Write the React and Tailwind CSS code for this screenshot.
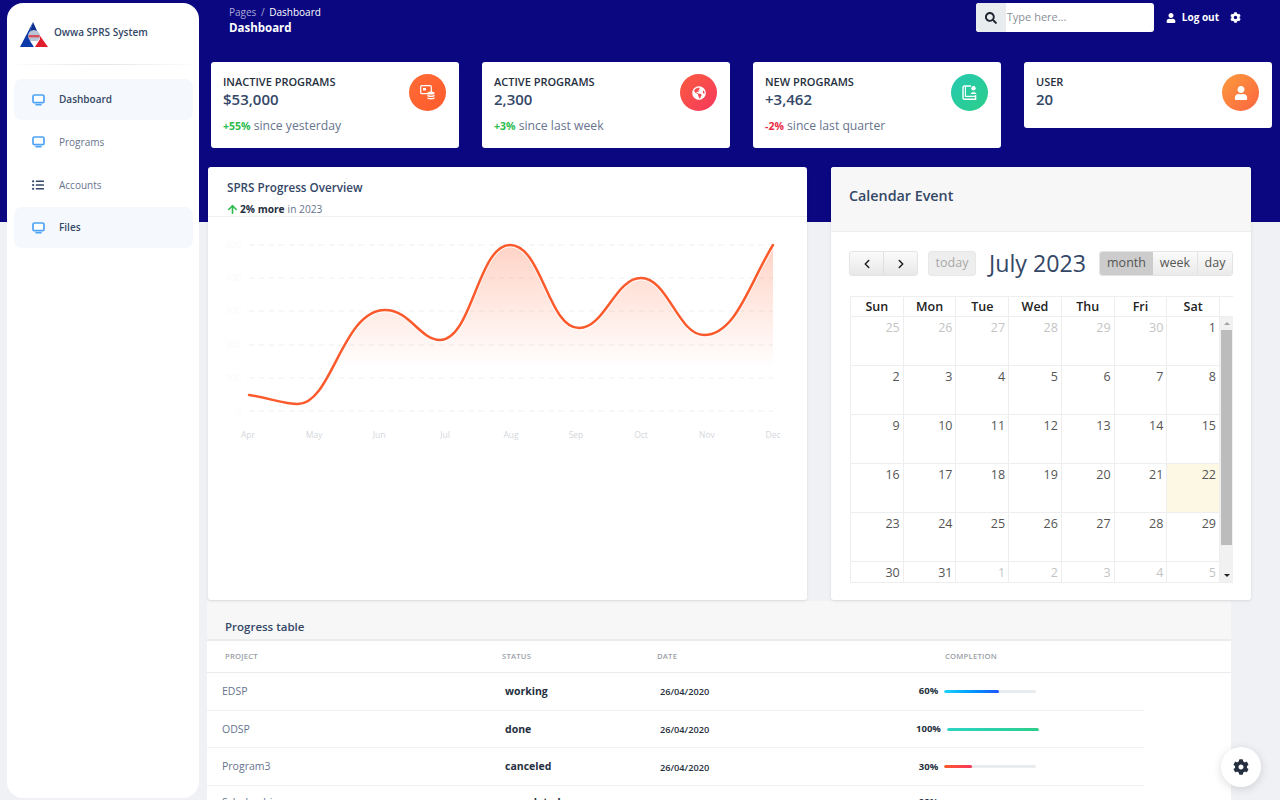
import React from "react";
import { FaSearch, FaUser, FaCog, FaListUl, FaGlobeAmericas } from "react-icons/fa";
import { ArrowUp, ChevronLeft, ChevronRight } from "lucide-react";

function Logo() {
  return (
    <svg width="30" height="27" viewBox="0 0 30 27" className="mt-[4px] shrink-0">
      <path d="M14 1 L1 26 L15 26 L10 14 Z" fill="#0c3aa8" />
      <path d="M14 1 L19 12 L10 14 Z" fill="#0c2f8f" />
      <path d="M19 12 L29 26 L16 26 L21 18 Z" fill="#e0202e" />
      <circle cx="15" cy="15" r="6" fill="#b9c4d6" />
      <rect x="9.5" y="14" width="11" height="2.4" fill="#d8505a" />
      <path d="M11 20 L19 20 L15 26 Z" fill="#ffffff" />
    </svg>
  );
}

function MonitorIcon() {
  return (
    <svg width="13" height="12" viewBox="0 0 13 12" className="shrink-0">
      <rect x="1" y="1" width="11" height="7.6" rx="1.4" fill="#ffffff" stroke="#4da3f5" strokeWidth="1.7" />
      <path d="M4 10.8 H9" stroke="#4da3f5" strokeWidth="1.6" strokeLinecap="round" />
    </svg>
  );
}

function NavItem({ label, active, strong, icon }) {
  return (
    <div className={`mr-[6px] ml-[7px] flex h-[41px] items-center rounded-lg pl-[18px] ${active ? "bg-[#f5f9fd]" : ""}`}>
      <span className="flex w-[27px] items-center">{icon || <MonitorIcon />}</span>
      <span className={`text-[10px] ${strong ? "font-semibold text-[#344767]" : "font-medium text-[#67748e]"}`}>{label}</span>
    </div>
  );
}

function DbIcon() {
  return (
    <svg width="15" height="15" viewBox="0 0 15 15" fill="none">
      <rect x="0.7" y="0.7" width="10.6" height="8" rx="1" stroke="#fff" strokeWidth="1.2" />
      <rect x="3" y="3" width="3" height="2.4" fill="#fff" />
      <ellipse cx="11" cy="8" rx="3.6" ry="1.6" fill="#fff" />
      <path d="M7.4 9.6 C8 11 14 11 14.6 9.6 V11 C14 12.4 8 12.4 7.4 11 Z" fill="#fff" />
      <path d="M7.4 12 C8 13.4 14 13.4 14.6 12 V13.2 C14 14.8 8 14.8 7.4 13.2 Z" fill="#fff" />
    </svg>
  );
}

function BookIcon() {
  return (
    <svg width="15" height="15" viewBox="0 0 15 15" fill="none">
      <path d="M9 1 H2.6 C1.7 1 1 1.7 1 2.6 V13 C1 13.8 1.7 14.2 2.6 14.2 H13.6 V10" stroke="#fff" strokeWidth="1.4" />
      <path d="M3.4 1 V11.4 H13.6" stroke="#fff" strokeWidth="1.1" />
      <circle cx="11.5" cy="3.2" r="2.2" fill="#fff" />
      <path d="M8.6 9 C8.6 6.8 14.4 6.8 14.4 9 Z" fill="#fff" />
    </svg>
  );
}

function StatCard({ title, value, delta, deltaColor, since, gradient, icon }) {
  return (
    <div className={`relative flex w-[248px] items-start justify-between rounded-[3px] bg-white pt-[13px] pr-[13px] pl-[12px] ${since ? "h-[86px]" : "h-[66px]"}`}>
      <div>
        <div className="text-[11px] leading-[14px] font-semibold text-[#252f40] uppercase">{title}</div>
        <div className="text-[15px] leading-[21px] font-semibold text-[#344767]">{value}</div>
        {since && (
          <div className="mt-[7px] text-[12.2px] leading-[18px] text-[#67748e]">
            <span className={`text-[10.5px] font-bold ${deltaColor}`}>{delta}</span> {since}
          </div>
        )}
      </div>
      <div className={`mt-[-1px] flex h-[37px] w-[37px] items-center justify-center rounded-full ${gradient}`}>{icon}</div>
    </div>
  );
}

const pts = "M249,395 C270,398 283,404 298,404 C332,404 342,310 385,310 C410,310 420,340 440,340 C472,340 478,245 510,245 C542,245 548,328 579,328 C605,328 615,278 641,278 C668,278 678,335 704,335 C736,335 750,282 773,245";

function Chart() {
  const ys = [245, 278, 311, 345, 378, 411];
  const yl = ["500", "400", "300", "200", "100", "0"];
  const xs = [["Apr", 248], ["May", 314], ["Jun", 379], ["Jul", 445], ["Aug", 511], ["Sep", 576], ["Oct", 641], ["Nov", 707], ["Dec", 773]];
  return (
    <svg width="599" height="230" viewBox="208 217 599 230" className="block">
      <defs>
        <linearGradient id="area" gradientUnits="userSpaceOnUse" x1="0" y1="245" x2="0" y2="368">
          <stop offset="0" stopColor="#ff5722" stopOpacity="0.26" />
          <stop offset="1" stopColor="#ff5722" stopOpacity="0" />
        </linearGradient>
      </defs>
      {ys.map((y, i) => (
        <g key={y}>
          <line x1="249" x2="773" y1={y} y2={y} stroke="#eeeff2" strokeWidth="1" strokeDasharray="5 5" />
          <text x="241" y={y + 3} textAnchor="end" fontSize="9" fill="#fafafb" fontFamily="Open Sans">{yl[i]}</text>
        </g>
      ))}
      <path d={`${pts} L773,370 L249,370 Z`} fill="url(#area)" />
      <path d={pts} fill="none" stroke="#ffffff" strokeWidth="3.6" transform="translate(0,0.8)" opacity="0.8" />
      <path d={pts} fill="none" stroke="#fb5a2c" strokeWidth="2.5" strokeLinecap="round" />
      {xs.map(([l, x]) => (
        <text key={l} x={x} y="438" textAnchor="middle" fontSize="8.5" fill="#d5d7dc" fontFamily="Open Sans">{l}</text>
      ))}
    </svg>
  );
}

const weeks = [
  [["25", 1], ["26", 1], ["27", 1], ["28", 1], ["29", 1], ["30", 1], ["1"]],
  [["2"], ["3"], ["4"], ["5"], ["6"], ["7"], ["8"]],
  [["9"], ["10"], ["11"], ["12"], ["13"], ["14"], ["15"]],
  [["16"], ["17"], ["18"], ["19"], ["20"], ["21"], ["22", 0, 1]],
  [["23"], ["24"], ["25"], ["26"], ["27"], ["28"], ["29"]],
  [["30"], ["31"], ["1", 1], ["2", 1], ["3", 1], ["4", 1], ["5", 1]],
];

function Calendar() {
  return (
    <div className="h-[433px] w-[420px] overflow-hidden rounded-[3px] bg-white shadow-[0_1px_3px_rgba(0,0,0,0.1)]">
      <div className="flex h-[65px] items-start border-b border-[#eeeeee] bg-[#f7f7f7] pt-[18px] pl-[18px] text-[14.3px] leading-[22px] font-semibold text-[#344767]">Calendar Event</div>
      <div className="mt-[19px] ml-[18px] flex h-[25px] w-[384px] items-center">
        <div className="flex h-[25px] w-[69px] rounded-[3px] border border-[#e4e4e4] bg-gradient-to-b from-[#fbfbfb] to-[#e8e8e8] text-[#222222]">
          <span className="flex w-[34px] items-center justify-center border-r border-[#e0e0e0]"><ChevronLeft size={14} strokeWidth={2.6} /></span>
          <span className="flex flex-1 items-center justify-center"><ChevronRight size={14} strokeWidth={2.6} /></span>
        </div>
        <div className="ml-[10px] flex h-[25px] w-[48px] items-center justify-center rounded-[3px] border border-[#e8e8e8] bg-[#eeeeee] text-[12.5px] text-[#a8a8a8]">today</div>
        <div className="flex-1 text-center text-[23.2px] leading-[25px] text-[#344767]">July 2023</div>
        <div className="flex h-[25px] w-[134px] overflow-hidden rounded-[3px] border border-[#e4e4e4] text-[12.5px] text-[#555555]">
          <span className="flex w-[53px] items-center justify-center bg-[#cccccc]">month</span>
          <span className="flex w-[45px] items-center justify-center border-r border-[#e4e4e4] bg-gradient-to-b from-[#fbfbfb] to-[#eaeaea]">week</span>
          <span className="flex flex-1 items-center justify-center bg-gradient-to-b from-[#fbfbfb] to-[#eaeaea]">day</span>
        </div>
      </div>
      <div className="mt-[20px] ml-[19px] w-[383px] border-y border-l border-[#eeeeee]">
        <div className="flex h-[20px] border-b border-[#eeeeee]">
          <div className="grid w-[369px] grid-cols-7">
            {["Sun", "Mon", "Tue", "Wed", "Thu", "Fri", "Sat"].map((d) => (
              <div key={d} className="border-r border-[#eeeeee] text-center text-[12.5px] leading-[19px] font-semibold text-[#222222]">{d}</div>
            ))}
          </div>
        </div>
        <div className="flex h-[265px] overflow-hidden">
          <div className="w-[369px]">
            {weeks.map((w, i) => (
              <div key={i} className="grid h-[49px] w-[369px] grid-cols-7 border-b border-[#eeeeee]">
                {w.map(([d, muted, today], j) => (
                  <div key={j} className={`border-r border-[#eeeeee] pt-[2px] pr-[3px] text-right text-[12.5px] leading-[18px] ${muted ? "text-[#c4c4c4]" : "text-[#555555]"} ${today ? "bg-[#fcf8e3]" : ""}`}>{d}</div>
                ))}
              </div>
            ))}
          </div>
          <div className="flex w-[14px] flex-col items-center bg-[#f1f1f1]">
            <div className="flex h-[13px] items-center justify-center"><div className="h-0 w-0 border-x-[3px] border-b-[3px] border-x-transparent border-b-[#a3a3a3]" /></div>
            <div className="h-[215px] w-[11px] bg-[#bcbcbc]" />
            <div className="flex-1" />
            <div className="flex h-[13px] items-center justify-center"><div className="h-0 w-0 border-x-[3px] border-t-[3px] border-x-transparent border-t-[#222222]" /></div>
          </div>
        </div>
      </div>
    </div>
  );
}

const rows = [
  { p: "EDSP", s: "working", pct: "60%", w: "w-[60%]", g: "from-[#21d4fd] to-[#2152ff]", h: "h-[37.7px]" },
  { p: "ODSP", s: "done", pct: "100%", w: "w-full", g: "from-[#2dd4c4] to-[#2dce89]", h: "h-[37.7px]" },
  { p: "Program3", s: "canceled", pct: "30%", w: "w-[30%]", g: "from-[#ff5722] to-[#f5365c]", h: "h-[37.7px]" },
  { p: "Scholarship", s: "completed", pct: "80%", w: "w-[80%]", g: "from-[#21d4fd] to-[#2152ff]", h: "h-[34px]" },
];

function ProgressTable() {
  return (
    <div className="mt-[1px] ml-[8px] w-[1024px] rounded-t-[3px] bg-white">
      <div className="flex h-[40px] items-end border-b-2 border-[#ebebeb] bg-[#f7f7f7] pb-[4px] pl-[18px] text-[11.5px] font-semibold text-[#344767]">Progress table</div>
      <div className="grid h-[32px] grid-cols-[295px_155px_288px_1fr] items-center border-b border-[#e9ecef] pl-[18px] text-[7.7px] font-semibold tracking-[0.2px] text-[#9a9fa8] uppercase">
        <div>Project</div>
        <div className="ml-[-18px]">Status</div>
        <div className="ml-[-18px]">Date</div>
        <div className="ml-[-18px]">Completion</div>
      </div>
      {rows.map((r) => (
        <div key={r.p} className={`grid w-[937px] grid-cols-[283px_155px_240px_155px_1fr] items-center border-b border-[#f2f3f5] pl-[15px] ${r.h}`}>
          <div className="pt-[1px] text-[10.5px] text-[#67748e]">{r.p}</div>
          <div className="pt-[1px] text-[10.5px] font-bold text-[#252f40]">{r.s}</div>
          <div className="pt-[2px] text-[9.2px] font-semibold text-[#252f40]">26/04/2020</div>
          <div className="flex items-center justify-center gap-[6px]">
            <span className="text-[9.5px] font-bold text-[#252f40]">{r.pct}</span>
            <div className="h-[3px] w-[92px] overflow-hidden rounded-full bg-[#e9ecef]">
              <div className={`h-full rounded-full bg-gradient-to-r ${r.w} ${r.g}`} />
            </div>
          </div>
          <div />
        </div>
      ))}
    </div>
  );
}

export default function App() {
  return (
    <div className="relative flex h-[800px] w-[1280px] overflow-hidden bg-[#f0f1f5] font-['Open_Sans',sans-serif]">
      <div className="absolute inset-x-0 top-0 h-[222px] bg-[#0a0780]" />

      <aside className="relative mt-[3px] ml-[7px] h-[795px] w-[192px] shrink-0 rounded-2xl bg-white">
        <div className="flex h-[61px] items-center gap-[4px] pb-[2px] pl-[12px]">
          <Logo />
          <span className="ml-[1px] text-[10px] font-semibold whitespace-nowrap text-[#344767]">Owwa SPRS System</span>
        </div>
        <div className="h-[1px] bg-gradient-to-r from-white via-[#e4e5e8] to-white" />
        <div className="mt-[14px] flex flex-col gap-[1.8px]">
          <NavItem label="Dashboard" active strong />
          <NavItem label="Programs" />
          <NavItem label="Accounts" icon={<FaListUl size={12} color="#344767" />} />
          <NavItem label="Files" active strong />
        </div>
      </aside>

      <main className="relative flex-1">
        <header className="flex h-[62px] items-start justify-between pr-[39px] pl-[30px]">
          <div className="pt-[4px]">
            <div className="text-[10px] leading-[16px] text-[#a9a8d6]">Pages <span className="mx-[2px]">/</span> <span className="text-white">Dashboard</span></div>
            <div className="text-[11.5px] leading-[16px] font-bold text-white">Dashboard</div>
          </div>
          <div className="flex items-center pt-[3px]">
            <div className="flex h-[29px] w-[178px] overflow-hidden rounded-[3px] bg-white">
              <span className="flex w-[30px] items-center justify-center bg-[#e9ecef] text-[#1f2430]"><FaSearch size={12} /></span>
              <span className="flex items-center pl-[1px] text-[11px] text-[#8a8f98]">Type here...</span>
            </div>
            <div className="ml-[12px] flex items-center gap-[6px] text-white">
              <FaUser size={10} />
              <span className="text-[10px] font-bold">Log out</span>
            </div>
            <FaCog size={11} color="#ffffff" className="ml-[11px]" />
          </div>
        </header>

        <section className="flex items-start gap-[23px] pl-[12px]">
          <StatCard title="Inactive Programs" value="$53,000" delta="+55%" deltaColor="text-[#2dbb4e]" since="since yesterday" gradient="bg-gradient-to-br from-[#ff6b35] to-[#ff5a2c]" icon={<DbIcon />} />
          <StatCard title="Active Programs" value="2,300" delta="+3%" deltaColor="text-[#2dbb4e]" since="since last week" gradient="bg-gradient-to-br from-[#fb5a3c] to-[#f5365c]" icon={<FaGlobeAmericas size={14} color="#ffffff" />} />
          <StatCard title="New Programs" value="+3,462" delta="-2%" deltaColor="text-[#ea2a45]" since="since last quarter" gradient="bg-gradient-to-br from-[#25c9b0] to-[#2dce89]" icon={<BookIcon />} />
          <StatCard title="User" value="20" gradient="bg-gradient-to-br from-[#fb9a3c] to-[#fb6340]" icon={<FaUser size={14} color="#ffffff" />} />
        </section>

        <section className="mt-[19px] ml-[9px] flex items-start gap-[24px]">
          <div className="h-[433px] w-[599px] rounded-[3px] bg-white shadow-[0_1px_3px_rgba(0,0,0,0.1)]">
            <div className="h-[50px] border-b border-[#eeeff1] pt-[11px] pl-[19px]">
              <div className="text-[11.7px] leading-[18px] font-semibold text-[#344767]">SPRS Progress Overview</div>
              <div className="mt-[6px] ml-[-1px] flex items-center text-[10.2px] leading-[15px] text-[#67748e]">
                <ArrowUp size={13} strokeWidth={3} color="#2dbb4e" className="mr-[1px]" />
                <span className="font-bold text-[#252f40]">2% more</span>
                <span className="ml-[3px]">in 2023</span>
              </div>
            </div>
            <Chart />
          </div>
          <Calendar />
        </section>

        <ProgressTable />

        <div className="absolute top-[747px] left-[1022px] flex h-[40px] w-[40px] items-center justify-center rounded-full bg-white shadow-[0_2px_10px_rgba(0,0,0,0.14)]">
          <FaCog size={16} color="#252f40" />
        </div>
      </main>
    </div>
  );
}
